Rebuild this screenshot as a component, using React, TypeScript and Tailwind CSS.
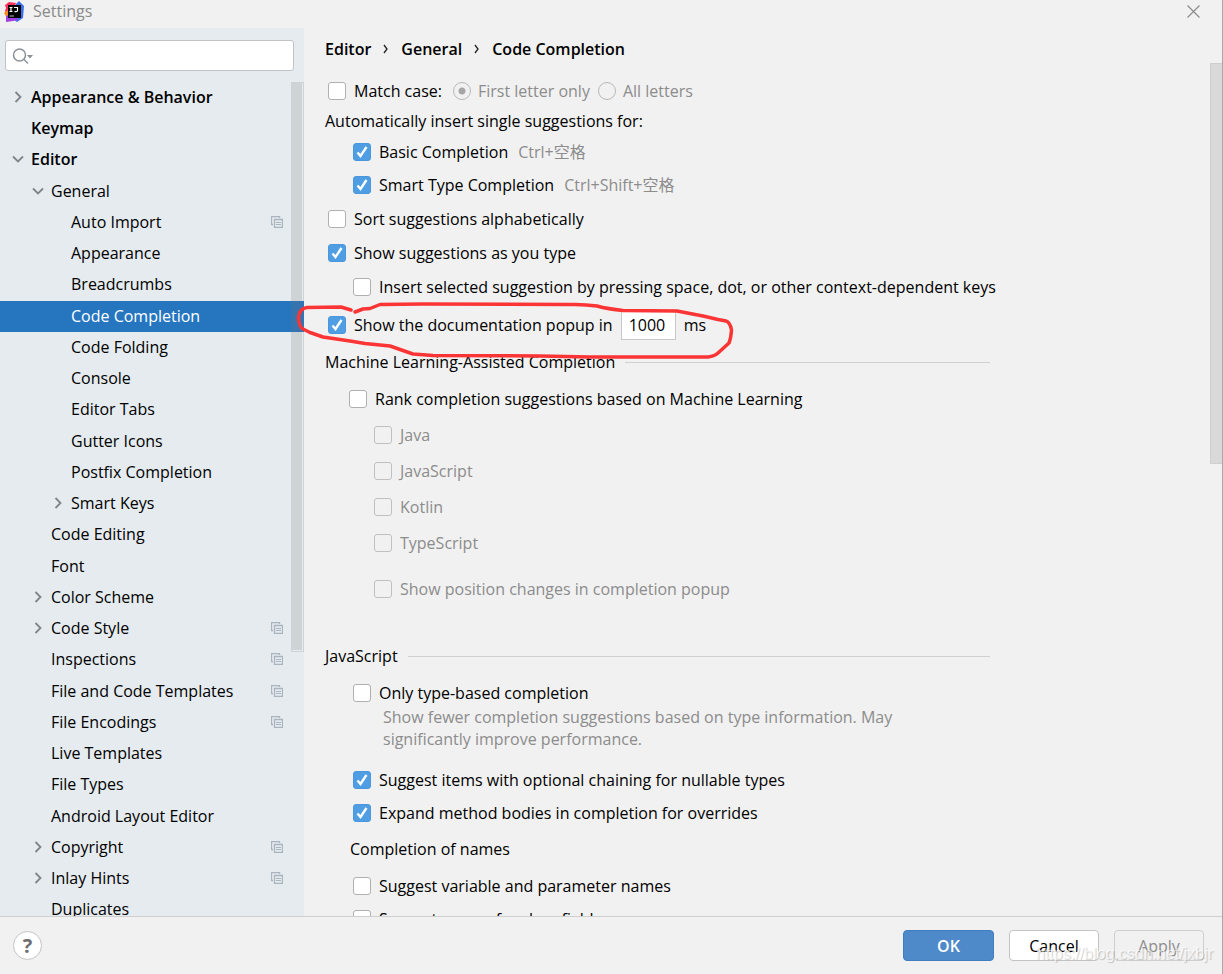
import { useState, type ReactNode } from "react";
import clsx from "clsx";

type TreeItem = {
    label: string;
    level: number;
    bold?: boolean;
    arrow?: "open" | "closed";
    project?: boolean;
};

const tree: TreeItem[] = [
    { label: "Appearance & Behavior", level: 0, bold: true, arrow: "closed" },
    { label: "Keymap", level: 0, bold: true },
    { label: "Editor", level: 0, bold: true, arrow: "open" },
    { label: "General", level: 1, arrow: "open" },
    { label: "Auto Import", level: 2, project: true },
    { label: "Appearance", level: 2 },
    { label: "Breadcrumbs", level: 2 },
    { label: "Code Completion", level: 2 },
    { label: "Code Folding", level: 2 },
    { label: "Console", level: 2 },
    { label: "Editor Tabs", level: 2 },
    { label: "Gutter Icons", level: 2 },
    { label: "Postfix Completion", level: 2 },
    { label: "Smart Keys", level: 2, arrow: "closed" },
    { label: "Code Editing", level: 1 },
    { label: "Font", level: 1 },
    { label: "Color Scheme", level: 1, arrow: "closed" },
    { label: "Code Style", level: 1, arrow: "closed", project: true },
    { label: "Inspections", level: 1, project: true },
    { label: "File and Code Templates", level: 1, project: true },
    { label: "File Encodings", level: 1, project: true },
    { label: "Live Templates", level: 1 },
    { label: "File Types", level: 1 },
    { label: "Android Layout Editor", level: 1 },
    { label: "Copyright", level: 1, arrow: "closed", project: true },
    { label: "Inlay Hints", level: 1, arrow: "closed", project: true },
    { label: "Duplicates", level: 1 },
];

const indent = ["pl-[11px]", "pl-[31px]", "pl-[51px]"];

function Logo() {
    return (
        <svg width="20" height="21" viewBox="0 0 20 21" aria-hidden="true">
            <path d="M1 4 5 1l7 1-3 9-6 3-2-4 1-3z" fill="#fc315c" />
            <path d="M0 12l4-3 1 5-2 3z" fill="#f98c1f" />
            <path d="M12 3l3-3 5 5-1 12-6 4-4-3z" fill="#3d6fe8" />
            <path d="M2 15l8-3 4 7-5 1-7 1z" fill="#a23fe0" />
            <path d="M4 4h13v13H4z" fill="#000" />
            <path d="M5.500 6.500h3M7 6.500v4M5.500 10.500h3M10 6.500h3.500v3q0 1.200-1.500 1.200h-1.500" fill="none" stroke="#fff" strokeWidth="1.200" />
            <path d="M5.500 15h4.500" stroke="#bbb" />
        </svg>
    );
}

function Arrow({ open }: { open: boolean }) {
    return (
        <svg width="14" height="14" viewBox="0 0 14 14" fill="none" stroke="#7f8488" strokeWidth="1.800" aria-hidden="true">
            <path d={open ? "M2 4.500l5 5 5-5" : "M4.500 2l5 5-5 5"} />
        </svg>
    );
}

function ProjectIcon() {
    return (
        <svg width="12" height="12" viewBox="0 0 12 12" fill="none" stroke="#a9b4bc" aria-hidden="true">
            <path d="M2 8.500H.5v-8h8V2" strokeWidth="1.300" />
            <path d="M3.500 3.500h8v8h-8z" strokeWidth="1.300" />
            <path d="M5 6.500h5M5 8.500h5" />
        </svg>
    );
}

function Crumb() {
    return (
        <svg width="6" height="10" viewBox="0 0 6 10" fill="none" stroke="#222" strokeWidth="1.300" aria-hidden="true">
            <path d="M1 1l3 4-3 4" />
        </svg>
    );
}

function Check({ children, checked, disabled }: { children: ReactNode; checked?: boolean; disabled?: boolean }) {
    const [on, setOn] = useState(!!checked);

    return (
        <label className={clsx("flex items-center gap-2", disabled && "text-[#8c8c8c]")}>
            <span className="grid shrink-0">
                <input
                    type="checkbox"
                    checked={on}
                    disabled={disabled}
                    onChange={() => setOn(!on)}
                    className="col-start-1 row-start-1 size-[18px] appearance-none rounded-[3px] border border-[#b0b0b0] bg-white checked:border-[#4b97de] checked:bg-[#4f9ee3] disabled:border-[#c0c0c0] disabled:bg-transparent"
                />
                {on && (
                    <svg width="18" height="18" viewBox="0 0 18 18" className="pointer-events-none col-start-1 row-start-1" fill="none" stroke="#fff" strokeWidth="2.400" aria-hidden="true">
                        <path d="M4.500 9.500l3 3.500 6-9" />
                    </svg>
                )}
            </span>
            <span>{children}</span>
        </label>
    );
}

function Radio({ label, checked }: { label: string; checked?: boolean }) {
    return (
        <label className="flex items-center gap-[7px] text-[#8c8c8c]">
            <input
                type="radio"
                name="case"
                disabled
                defaultChecked={checked}
                className="size-[18px] appearance-none rounded-full border border-[#b8b8b8] checked:bg-[radial-gradient(circle,#a6a6a6_3px,transparent_4px)]"
            />
            {label}
        </label>
    );
}

function Row({ className, children }: { className: string; children: ReactNode }) {
    return <div className={clsx("flex items-center", className)}>{children}</div>;
}

function Section({ title, className }: { title: string; className: string }) {
    return (
        <div className={clsx("flex items-center gap-[10px]", className)}>
            <h2>{title}</h2>
            <div className="h-px flex-1 bg-[#d0d0d0]" />
        </div>
    );
}

function Sidebar() {
    const [selected, setSelected] = useState("Code Completion");

    return (
        <aside className="flex w-[304px] shrink-0 flex-col overflow-hidden bg-[#e5ebef]">
            <div className="px-[5px] pt-3 pb-[11px]">
                <div className="mr-[5px] flex h-[31px] items-center rounded-[3px] border border-[#c0c4c7] bg-white pl-[6px]">
                    <svg width="22" height="18" viewBox="0 0 22 18" fill="none" stroke="#8a9299" strokeWidth="1.500" aria-hidden="true">
                        <circle cx="7.500" cy="8" r="6" />
                        <path d="M12 12.500l4 4" />
                        <path d="M15 8h6l-3 3.500z" fill="#8a9299" stroke="none" />
                    </svg>
                    <input type="text" aria-label="Search settings" className="min-w-0 flex-1 px-1 outline-none" />
                </div>
            </div>
            <nav className="relative min-h-0 flex-1">
                <ul>
                    {tree.map((item) => (
                        <li key={item.label} className="h-[31px] [&:nth-child(4n+3)]:h-8">
                            <button
                                type="button"
                                onClick={() => setSelected(item.label)}
                                className={clsx(
                                    "flex h-[31px] w-full items-center gap-[6px] pr-[21px] pb-[2px] text-left",
                                    indent[item.level],
                                    item.bold && "font-semibold",
                                    item.label === selected && "bg-[#2675bf] text-white"
                                )}
                            >
                                <span className="w-[14px]">{item.arrow && <Arrow open={item.arrow === "open"} />}</span>
                                <span className="flex-1">{item.label}</span>
                                {item.project && <ProjectIcon />}
                            </button>
                        </li>
                    ))}
                </ul>
                <div className="absolute top-0 right-0 h-[570px] w-[13px] border border-[#737373]/20 bg-[#737373]/20 bg-clip-content pr-px pb-px" />
            </nav>
        </aside>
    );
}

export default function App() {
    return (
        <div className="relative flex h-screen flex-col overflow-hidden border-r border-[#a8a8a8] bg-[#f1f1f1] font-['Open_Sans','Noto_Sans_CJK_SC',sans-serif] text-base leading-[22px] text-black">
            <header className="flex h-7 shrink-0 items-start justify-between pr-[22px] pl-1">
                <div className="flex items-center gap-[9px] text-[#8a8a8a]">
                    <Logo />
                    <h1>Settings</h1>
                </div>
                <button type="button" aria-label="Close" className="pt-[5px]">
                    <svg width="13" height="13" viewBox="0 0 13 13" stroke="#8c8c8c" strokeWidth="1.200" aria-hidden="true">
                        <path d="M.5.5l12 12M12.500.5l-12 12" />
                    </svg>
                </button>
            </header>

            <div className="flex min-h-0 flex-1">
                <Sidebar />
                <main className="flex min-w-0 flex-1 flex-col overflow-hidden">
                    <nav className="flex h-[35px] shrink-0 items-center gap-3 pt-[7px] pl-[21px] font-semibold">
                        <a href="#">Editor</a>
                        <Crumb />
                        <a href="#">General</a>
                        <Crumb />
                        <a href="#">Code Completion</a>
                    </nav>
                    <div className="flex min-h-0 flex-1 justify-between">
                        <div className="w-full max-w-[686px] pt-3 pl-[21px] whitespace-nowrap">
                            <Row className="h-[31px] gap-[11px] pl-[3px]">
                                <Check>Match case:</Check>
                                <div className="flex gap-2">
                                    <Radio label="First letter only" checked />
                                    <Radio label="All letters" />
                                </div>
                            </Row>
                            <p className="flex h-[30px] items-center">Automatically insert single suggestions for:</p>
                            <Row className="h-[31px] gap-[10px] pl-7">
                                <Check checked>Basic Completion</Check>
                                <span className="text-[#8c8c8c]">Ctrl+空格</span>
                            </Row>
                            <Row className="h-[35px] gap-[10px] pl-7">
                                <Check checked>Smart Type Completion</Check>
                                <span className="text-[#8c8c8c]">Ctrl+Shift+空格</span>
                            </Row>
                            <Row className="h-[34px] pl-[3px]">
                                <Check>Sort suggestions alphabetically</Check>
                            </Row>
                            <Row className="h-[34px] pl-[3px]">
                                <Check checked>Show suggestions as you type</Check>
                            </Row>
                            <Row className="h-[34px] pl-7">
                                <Check>Insert selected suggestion by pressing space, dot, or other context-dependent keys</Check>
                            </Row>
                            <Row className="h-[42px] gap-2 pl-[3px]">
                                <Check checked>Show the documentation popup in</Check>
                                <input
                                    type="text"
                                    defaultValue="1000"
                                    aria-label="Popup delay in milliseconds"
                                    className="h-[30px] w-[55px] border border-[#c8c8c8] bg-white px-[7px] outline-none"
                                />
                                <span>ms</span>
                            </Row>
                            <Section title="Machine Learning-Assisted Completion" className="h-8" />
                            <Row className="mt-[3px] h-9 pl-6">
                                <Check>Rank completion suggestions based on Machine Learning</Check>
                            </Row>
                            {["Java", "JavaScript", "Kotlin", "TypeScript"].map((lang) => (
                                <Row key={lang} className="h-9 pl-[49px]">
                                    <Check disabled>{lang}</Check>
                                </Row>
                            ))}
                            <Row className="mt-[11px] h-[34px] pl-[49px]">
                                <Check disabled>Show position changes in completion popup</Check>
                            </Row>
                            <Section title="JavaScript" className="mt-[33px] h-[34px]" />
                            <Row className="mt-[3px] h-[34px] pl-7">
                                <Check>Only type-based completion</Check>
                            </Row>
                            <p className="-mt-1 w-[600px] pl-[58px] whitespace-normal text-[#8c8c8c]">
                                Show fewer completion suggestions based on type information. May significantly improve performance.
                            </p>
                            <Row className="mt-[13px] h-[33px] pl-7">
                                <Check checked>Suggest items with optional chaining for nullable types</Check>
                            </Row>
                            <Row className="h-[33px] pl-7">
                                <Check checked>Expand method bodies in completion for overrides</Check>
                            </Row>
                            <h3 className="mt-[3px] flex h-[34px] items-center pl-[25px]">Completion of names</h3>
                            <Row className="mt-[3px] h-[33px] pl-7">
                                <Check>Suggest variable and parameter names</Check>
                            </Row>
                            <Row className="h-[33px] pl-7">
                                <Check>Suggest names for class fields</Check>
                            </Row>
                        </div>
                        <div className="h-[401px] w-3 shrink-0 border border-r-0 border-[#cfcfcf] bg-[#d9d9d9]" />
                    </div>
                </main>
            </div>

            <footer className="z-10 flex h-[58px] shrink-0 items-center justify-between border-t border-[#cfcfcf] bg-[#f1f1f1] pr-[18px] pl-[13px]">
                <button type="button" aria-label="Help" className="grid size-[29px] place-items-center rounded-full border border-[#c4c4c4] bg-white text-xl font-bold text-[#6e6e6e]">
                    ?
                </button>
                <div className="flex gap-[15px]">
                    <button type="button" className="h-[31px] w-[91px] rounded-[4px] border border-[#3f7cc0] bg-[#4e8aca] font-semibold text-white">
                        OK
                    </button>
                    <button type="button" className="h-[31px] w-[90px] rounded-[4px] border border-[#c4c4c4] bg-white">
                        Cancel
                    </button>
                    <button type="button" disabled className="h-[31px] w-[90px] rounded-[4px] border border-[#cfcfcf] text-[#8c8c8c]">
                        Apply
                    </button>
                </div>
            </footer>

            {/* red marker around the popup delay option */}
            <svg className="pointer-events-none absolute top-[300px] left-[294px]" width="444" height="62" viewBox="294 300 444 62" fill="none" stroke="#fb3535" strokeWidth="3.500" strokeLinecap="round" strokeLinejoin="round" aria-hidden="true">
                <path d="M351 310 L341 307 L307 307.500 Q300 308 298.500 317 Q299 327 303 329 L310 332.500 L323 337 L350 341 L365 343.500 L390 346 L413 354 L433 355.500 L540 356 L590 357 L708 357 Q715 356 718 353 L729 343 Q731 338 731.500 330 Q730 322 726 321 L718 319.500 L703 316 L677 311 L623 310.500 Q608 309 597 306 Q583 304 570 304.500 L423 304 L380 304.500 L370 308.500 L363 309 L355 312" />
            </svg>
            <span className="pointer-events-none absolute right-[9px] bottom-2 z-20 font-['Liberation_Sans',sans-serif] text-base text-white/70 [text-shadow:1px_1px_1px_#0003]">
                https://blog.csdn.net/jxbjr
            </span>
        </div>
    );
}
